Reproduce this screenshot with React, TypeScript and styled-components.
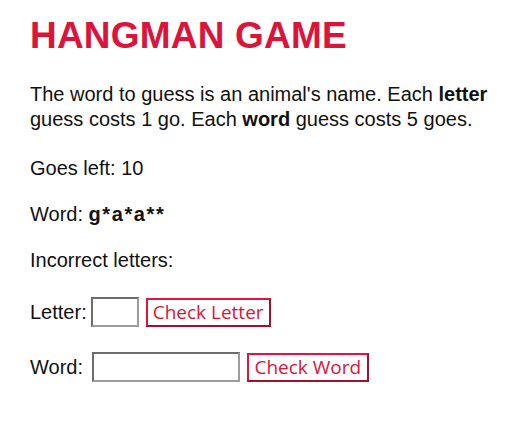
import React from "react";
import styled, { createGlobalStyle } from "styled-components";

const Global = createGlobalStyle`
  html, body { margin: 0; padding: 0; background: #ffffff; }
  body { font-family: "Liberation Sans", Arial, sans-serif; color: #111; }
`;

const Page = styled.main`
  padding: 15px 10px 0 30px;
`;

const Title = styled.h1`
  margin: 0;
  font-size: 37px;
  line-height: 42px;
  font-weight: bold;
  color: #dc143c;
  letter-spacing: 0.2px;
`;

const Para = styled.p<{ $top?: number }>`
  margin: ${(p) => p.$top ?? 21}px 0 0 0;
  font-size: 20px;
  line-height: 25px;
`;

const Masked = styled.b`
  letter-spacing: 1.6px;
`;

const FormRow = styled.div<{ $top: number }>`
  display: flex;
  align-items: center;
  margin-top: ${(p) => p.$top}px;
  font-size: 20px;
  line-height: 25px;
`;

const Label = styled.label<{ $gap: number }>`
  margin-right: ${(p) => p.$gap}px;
`;

const TextInput = styled.input<{ $w: number; $after: number }>`
  box-sizing: border-box;
  width: ${(p) => p.$w}px;
  height: 30px;
  border: 2px solid;
  border-color: #6d6d6d #9c9c9c #9c9c9c #6d6d6d;
  background: #fff;
  margin: 0 ${(p) => p.$after}px 0 0;
  padding: 2px 4px;
  font-size: 16px;
  outline: none;
`;

const Button = styled.button<{ $pad: number }>`
  box-sizing: border-box;
  height: 29px;
  border: 2px solid;
  border-color: #e0163f #a3102d #a3102d #e0163f;
  background: #fff;
  color: #dc143c;
  font-family: "Open Sans", sans-serif;
  font-size: 19px;
  line-height: 23px;
  padding: 0 ${(p) => p.$pad}px;
  margin: 0;
  cursor: pointer;
`;

export default function App() {
  return (
    <>
      <Global />
      <Page>
        <Title>HANGMAN GAME</Title>
        <Para $top={25}>
          The word to guess is an animal's name. Each <b>letter</b> guess costs 1 go. Each <b>word</b> guess costs 5 goes.
        </Para>
        <Para $top={24}>Goes left: 10</Para>
        <Para>
          Word: <Masked>g*a*a**</Masked>
        </Para>
        <Para>Incorrect letters: </Para>
        <FormRow $top={24}>
          <Label $gap={4}>Letter:</Label>
          <TextInput $w={48} $after={7} maxLength={1} />
          <Button $pad={5}>Check Letter</Button>
        </FormRow>
        <FormRow $top={25}>
          <Label $gap={9}>Word:</Label>
          <TextInput $w={148} $after={7} />
          <Button $pad={5.5}>Check Word</Button>
        </FormRow>
      </Page>
    </>
  );
}
